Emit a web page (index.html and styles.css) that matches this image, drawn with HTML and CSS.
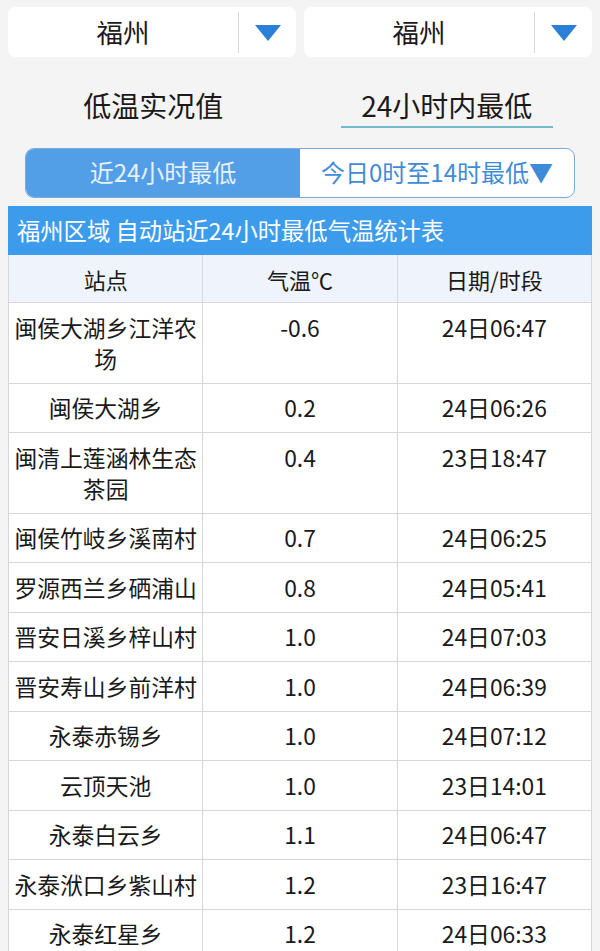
FILE: index.html
```html
<!DOCTYPE html>
<html lang="zh">
<head>
<meta charset="utf-8">
<link rel="stylesheet" href="styles.css">
</head>
<body>
<div class="page">
  <div class="selects">
    <div class="select">
      <span class="select-text">福州</span>
      <span class="select-arrow"><svg width="26" height="16" viewBox="0 0 26 16"><polygon points="0,0 26,0 13,16" fill="#2a7fd6"/></svg></span>
    </div>
    <div class="select">
      <span class="select-text">福州</span>
      <span class="select-arrow"><svg width="26" height="16" viewBox="0 0 26 16"><polygon points="0,0 26,0 13,16" fill="#2a7fd6"/></svg></span>
    </div>
  </div>
  <div class="tabs">
    <div class="tab">低温实况值</div>
    <div class="tab active"><span>24小时内最低</span></div>
  </div>
  <div class="seg">
    <div class="seg-item on">近24小时最低</div>
    <div class="seg-item">今日0时至14时最低▼</div>
  </div>
  <div class="title">福州区域 自动站近24小时最低气温统计表</div>
  <table class="data">
    <thead>
      <tr><th>站点</th><th>气温℃</th><th>日期/时段</th></tr>
    </thead>
    <tbody>
      <tr><td>闽侯大湖乡江洋农场</td><td>-0.6</td><td>24日06:47</td></tr>
      <tr><td>闽侯大湖乡</td><td>0.2</td><td>24日06:26</td></tr>
      <tr><td>闽清上莲涵林生态茶园</td><td>0.4</td><td>23日18:47</td></tr>
      <tr><td>闽侯竹岐乡溪南村</td><td>0.7</td><td>24日06:25</td></tr>
      <tr><td>罗源西兰乡硒浦山</td><td>0.8</td><td>24日05:41</td></tr>
      <tr><td>晋安日溪乡梓山村</td><td>1.0</td><td>24日07:03</td></tr>
      <tr><td>晋安寿山乡前洋村</td><td>1.0</td><td>24日06:39</td></tr>
      <tr><td>永泰赤锡乡</td><td>1.0</td><td>24日07:12</td></tr>
      <tr><td>云顶天池</td><td>1.0</td><td>23日14:01</td></tr>
      <tr><td>永泰白云乡</td><td>1.1</td><td>24日06:47</td></tr>
      <tr><td>永泰洑口乡紫山村</td><td>1.2</td><td>23日16:47</td></tr>
      <tr><td>永泰红星乡</td><td>1.2</td><td>24日06:33</td></tr>
    </tbody>
  </table>
</div>
</body>
</html>
```

FILE: styles.css
```css
html, body {
  margin: 0;
  padding: 0;
  background: #f4f4f4;
}
body {
  font-family: "Noto Sans CJK SC", "Noto Sans", sans-serif;
  color: #1a1a1a;
}
.page {
  padding: 7px 8px 0 8px;
}
.selects {
  display: flex;
  gap: 8px;
}
.select {
  flex: 1;
  height: 50px;
  background: #fff;
  border-radius: 8px;
  display: flex;
  align-items: center;
}
.select-text {
  width: 230px;
  text-align: center;
  font-size: 26.5px;
  line-height: 50px;
}
.select-arrow {
  flex: 1;
  height: 40px;
  border-left: 1px solid #d8d8d8;
  display: flex;
  align-items: center;
  justify-content: center;
  padding-top: 1px;
}
.tabs {
  display: flex;
  margin-top: 27px;
  height: 48px;
}
.tab {
  flex: 1;
  text-align: center;
  font-size: 28px;
  line-height: 42px;
}
.tab.active span {
  display: inline-block;
  padding: 0 6px;
  width: 200px;
  border-bottom: 2px solid #72b9cc;
}
.tab.active {
  padding-left: 3px;
}
.seg {
  display: flex;
  margin: 16px 17px 0 17px;
  height: 48px;
  border: 1px solid #7ea9d6;
  border-radius: 9px;
  overflow: hidden;
  background: #fff;
}
.seg-item {
  flex: 1;
  text-align: center;
  font-size: 24px;
  line-height: 46px;
  color: #3f8bd8;
}
.seg-item.on {
  background: #529fe7;
  color: #e8f1fb;
  flex: 0 0 274px;
}
.title {
  margin-top: 8px;
  background: #3d9bec;
  color: #fff;
  font-size: 23.3px;
  height: 49px;
  line-height: 49px;
  padding-left: 9px;
}
.data {
  width: 100%;
  border-collapse: collapse;
  table-layout: fixed;
  background: #fff;
}
.data th {
  background: #eef3fc;
  font-weight: normal;
  font-size: 22px;
  height: 47px;
  line-height: 30px;
  padding: 0;
  border: 1px solid #d6d8dd;
  border-top: none;
}
.data td {
  font-size: 22.8px;
  line-height: 31px;
  padding: 8.75px 4px;
  text-align: center;
  vertical-align: top;
  border: 1px solid #d6d6d6;
  word-break: break-all;
}
.data td:first-child {
  padding-left: 3px;
  padding-right: 3px;
}
```
